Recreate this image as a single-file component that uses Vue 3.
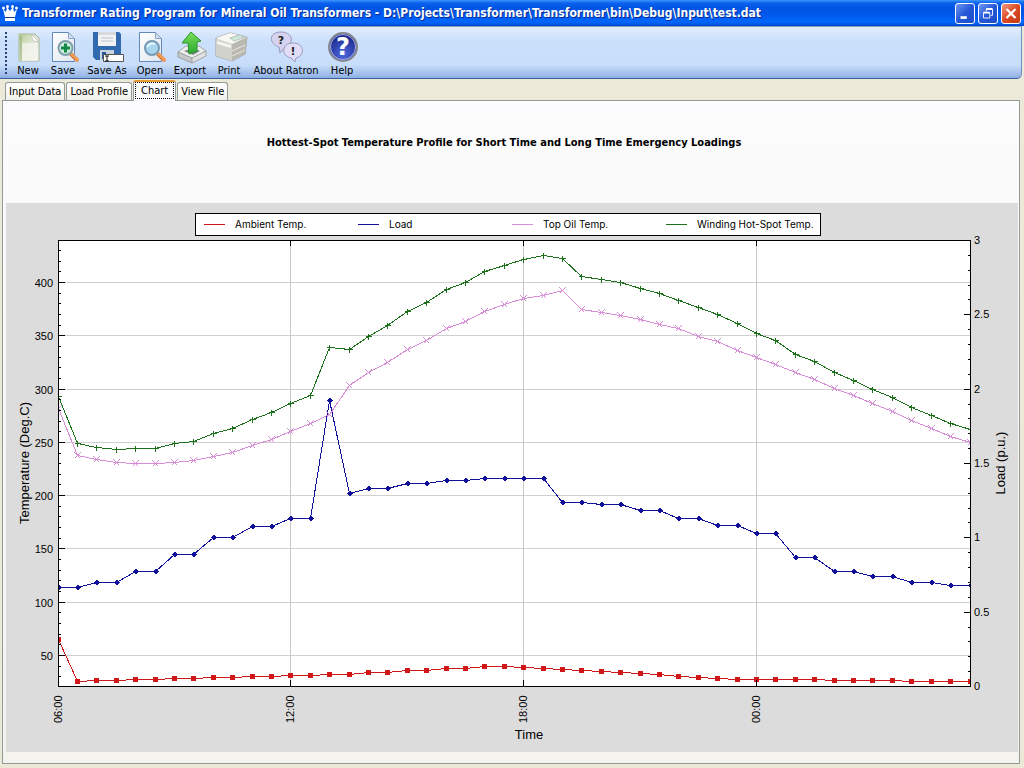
<script setup>
import { ref } from 'vue'

const tabs = ['Input Data', 'Load Profile', 'Chart', 'View File']
const active = ref('Chart')

const left = 52
const right = 964
const top = 37
const bottom = 483
const xAt = (i) => Math.floor(left + ((right - left) * i) / 47)

// Vertical plot positions, one per half hour from 06:00
const series = [
  {
    name: 'Ambient Temp.', color: '#d01818', shape: 'square',
    ys: [437, 479, 478, 478, 477, 477, 476, 476, 475, 475, 474, 474, 473, 473, 472, 472, 470, 470, 468, 468, 466, 466, 464, 464, 465, 466, 467, 468, 469, 470, 471, 472, 474, 475, 476, 477, 477, 477, 477, 477, 478, 478, 478, 478, 479, 479, 479, 479],
  },
  {
    name: 'Load', color: '#10109a', shape: 'diamond',
    ys: [385, 385, 380, 380, 369, 369, 352, 352, 335, 335, 324, 324, 316, 316, 198, 291, 286, 286, 281, 281, 278, 278, 276, 276, 276, 276, 300, 300, 302, 302, 308, 308, 316, 316, 323, 323, 331, 331, 355, 355, 369, 369, 374, 374, 380, 380, 383, 383],
  },
  {
    name: 'Top Oil Temp.', color: '#d68cd6', shape: 'cross',
    ys: [206, 253, 257, 260, 261, 261, 260, 258, 254, 250, 243, 237, 229, 221, 212, 183, 170, 160, 147, 138, 126, 119, 109, 102, 96, 93, 88, 107, 110, 113, 117, 122, 126, 134, 139, 148, 155, 162, 170, 177, 186, 193, 201, 209, 218, 226, 234, 240],
  },
  {
    name: 'Winding Hot-Spot Temp.', color: '#1c701c', shape: 'plus',
    ys: [194, 241, 245, 247, 246, 246, 241, 239, 231, 226, 217, 210, 201, 193, 145, 147, 134, 123, 109, 100, 87, 80, 69, 63, 57, 53, 56, 74, 77, 80, 86, 91, 98, 105, 112, 121, 131, 138, 152, 159, 170, 178, 187, 195, 205, 213, 221, 227],
  },
]
const points = (ys) => ys.map((y, i) => `${xAt(i)},${y}`).join(' ')
const marks = {
  square: 'M-2.5-2.5h5v5h-5z',
  diamond: 'M0-3L3 0 0 3-3 0z',
  cross: 'M-3-3L3 3M-3 3L3-3',
  plus: 'M-3 0H3M0-3V3',
}

const tempY = (t) => Math.round(452 - ((t - 50) * 373) / 350)
const temps = [50, 100, 150, 200, 250, 300, 350, 400]
const tempMinor = Array.from({ length: 42 }, (_, i) => 30 + i * 10).filter((t) => t % 50 && t < 440)
const loadY = (l) => Math.round(bottom - ((bottom - top) * l) / 3)
const loads = [0, 0.5, 1, 1.5, 2, 2.5, 3]
const loadMinor = Array.from({ length: 30 }, (_, i) => i / 10).filter((l) => (l * 10) % 5)
const times = [['06:00', 0], ['12:00', 12], ['18:00', 24], ['00:00', 36]]
</script>

<template>
  <div class="window">
    <header class="titlebar">
      <svg class="crown" viewBox="0 0 16 18" aria-hidden="true">
        <path d="M3 13L1 5l3 3 1-5 3 4 3-4 1 5 3-3-2 8z" fill="#fff" />
        <circle cx="1.5" cy="4" r="1.5" fill="#fff" /><circle cx="5.5" cy="2.5" r="1.5" fill="#fff" />
        <circle cx="10.5" cy="2.5" r="1.5" fill="#fff" /><circle cx="14.5" cy="4" r="1.5" fill="#fff" />
        <path d="M3 14h10v3H3z" fill="#fff" /><path d="M3 13.5h10" stroke="#123a80" />
      </svg>
      <h1>Transformer Rating Program for Mineral Oil Transformers - D:\Projects\Transformer\Transformer\bin\Debug\Input\test.dat</h1>
      <div class="controls">
        <button type="button" aria-label="Minimize"><svg viewBox="0 0 20 20"><path d="M5 13h7v3H5z" fill="#fff" /></svg></button>
        <button type="button" aria-label="Restore"><svg viewBox="0 0 20 20" fill="none" stroke="#fff"><path d="M8 8V5.5h7V12h-2M5 9v6h7V9z" /><path d="M8 5h7M5 9h7" stroke-width="2" /></svg></button>
        <button type="button" class="close" aria-label="Close"><svg viewBox="0 0 20 20"><path d="M5 5l10 10M15 5L5 15" stroke="#fff" stroke-width="2.5" /></svg></button>
      </div>
    </header>

    <nav class="toolbar" aria-label="Main">
      <span class="grip"></span>
      <div class="tools">
        <button type="button">
          <svg viewBox="0 0 32 32" aria-hidden="true">
            <defs>
              <linearGradient id="paper" x1="0" y1="0" x2="1" y2="1"><stop offset="0" stop-color="#fff" /><stop offset="1" stop-color="#dfe6ee" /></linearGradient>
              <linearGradient id="sheet" x1="0" y1="0" x2="1" y2="1"><stop offset="0" stop-color="#b4cc94" /><stop offset=".5" stop-color="#e4e8d8" /><stop offset="1" stop-color="#f4f4ee" /></linearGradient>
              <linearGradient id="green" x1="0" y1="0" x2="0" y2="1"><stop offset="0" stop-color="#7be05a" /><stop offset="1" stop-color="#28a82c" /></linearGradient>
              <radialGradient id="blue" cx=".5" cy=".75" r=".75"><stop offset="0" stop-color="#4c68e0" /><stop offset="1" stop-color="#15207e" /></radialGradient>
            </defs>
            <path d="M7 3h16l4 4v23H7z" fill="url(#sheet)" stroke="#aab89a" />
            <path d="M10 12h16v18H10z" fill="#f5f5ef" opacity=".7" /><path d="M9 5v24" stroke="#8eae6e" stroke-width="2" opacity=".5" />
            <path d="M19 3l8 8-6-1z" fill="#fff" stroke="#c6cabc" />
          </svg>New
        </button>
        <button type="button">
          <svg viewBox="0 0 32 32" aria-hidden="true">
            <path d="M5.5 1.5h16l6 6v23h-22z" fill="url(#paper)" stroke="#6287bd" /><path d="M21.5 1.5v6h6z" fill="#d4dfeb" stroke="#89a5c9" />
            <path d="M24 23l6 6" stroke="#f09a58" stroke-width="4" stroke-linecap="round" /><path d="M23 24l5 5" stroke="#c46325" />
            <circle cx="18.5" cy="17" r="7" fill="#cdebd9" stroke="#7e9fac" stroke-width="2" /><path d="M14 17h9M18.5 12.5v9" stroke="#16884a" stroke-width="3" />
          </svg>Save
        </button>
        <button type="button">
          <svg viewBox="0 0 32 32" aria-hidden="true">
            <path d="M2 1h26l2 2v26H5l-3-3z" fill="#3369af" /><path d="M7 1h18v14H7z" fill="#f0f2f3" /><path d="M7 1h18v3H7z" fill="#d6dadf" />
            <path d="M10 7h12M10 10h12" stroke="#bcc3ca" /><path d="M9 19h14v10H9z" fill="#c9d4e0" /><path d="M11 21h4v7h-4z" fill="#24569b" />
            <path d="M12.5 23.5h20v7h-20z" fill="#fff" stroke="#555" /><path d="M14 25h4M16 25v5M14 30h4" stroke="#111" />
          </svg>Save As
        </button>
        <button type="button">
          <svg viewBox="0 0 32 32" aria-hidden="true">
            <path d="M5.5 1.5h16l6 6v23h-22z" fill="url(#paper)" stroke="#6287bd" /><path d="M21.5 1.5v6h6z" fill="#d4dfeb" stroke="#89a5c9" />
            <path d="M24 23l6 6" stroke="#f09a58" stroke-width="4" stroke-linecap="round" /><path d="M23 24l5 5" stroke="#c46325" />
            <circle cx="18" cy="17" r="7" fill="#a8d6ef" stroke="#7899b3" stroke-width="2" /><path d="M13 16q3-5 8-3" fill="none" stroke="#e6f6ff" stroke-width="2" />
          </svg>Open
        </button>
        <button type="button">
          <svg viewBox="0 0 32 32" aria-hidden="true">
            <path d="M4 21l8-6h13l7 5-14 8z" fill="#eceeed" stroke="#a5a9a8" /><path d="M4 21l14 6v5L4 26z" fill="#c5c9c9" stroke="#999f9f" /><path d="M18 27l14-7v5l-14 7z" fill="#dfe2e1" stroke="#a0a5a4" />
            <path d="M10 20l9 4 7-4-7-3z" fill="#7e8684" /><path d="M17 1l10 9-4 1v9l-8 3-1-11H8z" fill="url(#green)" stroke="#299634" />
          </svg>Export
        </button>
        <button type="button">
          <svg viewBox="0 0 32 32" aria-hidden="true">
            <path d="M3 7l14-5 17 4-2 17-13 7-16-5z" fill="#e2e2de" stroke="#a1a19d" /><path d="M3 7l14-5 17 4-14 7z" fill="#f8f8f5" />
            <path d="M3 8l16 5v17L3 25z" fill="#d2d2cc" /><path d="M19 13l15-7-2 17-13 7z" fill="#b9b9b2" /><path d="M17 7l9-3 6 2-11 4z" fill="#cfe6da" stroke="#b5c5bb" />
            <path d="M4 10l14 4v3L4 13z" fill="#f4f4f0" /><path d="M19 20l13-6M19 25l13-6" stroke="#e8e8e2" />
          </svg>Print
        </button>
        <button type="button">
          <svg viewBox="0 0 32 32" aria-hidden="true">
            <path d="M9 16l1 6 5-6c9-2 9-15-4-15S-1 13 9 16z" fill="#d5d3f0" stroke="#9b99bd" />
            <path d="M21 27l4 4 1-4c9-2 9-15-3-15s-12 13-2 15z" fill="#e0def6" stroke="#9b99bd" />
            <text x="11" y="13" class="mark small">?</text><text x="23" y="24" class="mark small">!</text>
          </svg>About Ratron
        </button>
        <button type="button">
          <svg viewBox="0 0 32 32" aria-hidden="true">
            <circle cx="17" cy="16" r="14" fill="url(#blue)" stroke="#85878f" stroke-width="2" /><circle cx="17" cy="16" r="12.5" fill="none" stroke="#a6b0e8" />
            <text x="17" y="24" class="mark big">?</text>
          </svg>Help
        </button>
      </div>
    </nav>

    <div class="tabs" role="tablist">
      <button v-for="tab in tabs" :key="tab" type="button" role="tab" :aria-selected="tab === active" :class="{ selected: tab === active }" @click="active = tab"><span>{{ tab }}</span></button>
    </div>

    <main class="panel">
      <h2>Hottest-Spot Temperature Profile for Short Time and Long Time Emergency Loadings</h2>
      <svg class="chart" viewBox="0 0 1012 549" role="img" aria-label="Temperature and load against time">
        <rect width="1012" height="549" fill="#dcdcdc" />
        <g shape-rendering="crispEdges">
          <rect x="189.5" y="10.5" width="625" height="22" fill="#fff" stroke="#000" />
          <rect :x="left" :y="top" :width="right - left" :height="bottom - top" fill="#fff" />
          <path v-for="t in temps" :key="t" :d="`M${left} ${tempY(t) + 0.5}H${right}`" stroke="#d0d0d0" />
          <path v-for="[name, i] in times.slice(1)" :key="name" :d="`M${xAt(i) + 0.5} ${top}V${bottom}`" stroke="#c8c8c8" />
        </g>
        <g v-for="(s, n) in series" :key="s.name">
          <path :d="`M${198 + n * 154} 21.5h21`" :stroke="s.color" />
          <text :x="229 + n * 154" y="25" class="legend">{{ s.name }}</text>
        </g>
        <svg :x="left" :y="top" :width="right - left + 1" :height="bottom - top + 1" :viewBox="`${left} ${top} ${right - left + 1} ${bottom - top + 1}`">
          <g v-for="s in series" :key="s.name" :stroke="s.color" shape-rendering="crispEdges" transform="translate(0.5 -0.5)">
            <polyline :points="points(s.ys)" fill="none" />
            <path v-for="(y, i) in s.ys" :key="i" :d="marks[s.shape]" :transform="`translate(${xAt(i)} ${y})`" :fill="s.color" :stroke-width="s.shape === 'diamond' || s.shape === 'square' ? 0 : 1" />
          </g>
        </svg>
        <g shape-rendering="crispEdges" stroke="#000" fill="none">
          <rect :x="left + 0.5" :y="top + 0.5" :width="right - left" :height="bottom - top" />
          <path v-for="t in temps" :key="`a${t}`" :d="`M${left} ${tempY(t) + 0.5}h7`" />
          <path v-for="t in tempMinor" :key="`b${t}`" :d="`M${left} ${tempY(t) + 0.5}h3`" />
          <path v-for="l in loads" :key="`c${l}`" :d="`M${right} ${loadY(l) + 0.5}h-6`" />
          <path v-for="l in loadMinor" :key="`d${l}`" :d="`M${right} ${loadY(l) + 0.5}h-2`" />
          <path v-for="[name, i] in times.slice(1)" :key="name" :d="`M${xAt(i) + 0.5} ${top}v6M${xAt(i) + 0.5} ${bottom}v-6`" />
        </g>
        <g class="ticks">
          <text v-for="t in temps" :key="t" x="47" :y="tempY(t) + 5" text-anchor="end">{{ t }}</text>
          <text v-for="l in loads" :key="`l${l}`" x="968" :y="loadY(l) + 4">{{ l }}</text>
          <text v-for="[name, i] in times" :key="name" :transform="`translate(${xAt(i) + 4} 520) rotate(-90)`">{{ name }}</text>
        </g>
        <g class="axis" text-anchor="middle">
          <text x="523" y="536">Time</text>
          <text transform="translate(23 260) rotate(-90)">Temperature (Deg.C)</text>
          <text transform="translate(999 260) rotate(-90)">Load (p.u.)</text>
        </g>
      </svg>
    </main>
  </div>
</template>

<style>
body { margin: 0; background: #ece9d8; }
</style>

<style scoped>
.window {
  min-height: 100vh;
  box-sizing: border-box;
  display: flex;
  flex-direction: column;
  background: #ece9d8;
  font-family: "DejaVu Sans Condensed", "DejaVu Sans", sans-serif;
  font-size: 11px;
  color: #000;
}
button { font: inherit; color: inherit; padding: 0; border: 0; background: none; }
.titlebar {
  display: flex;
  align-items: center;
  height: 26px;
  padding: 0 3px 0 2px;
  background: linear-gradient(#3d95ff 0, #0b62ee 3px, #0054e3 8px, #0058ec 15px, #0267ff 22px, #0048cc 26px);
}
.crown { width: 16px; height: 18px; margin-right: 4px; }
h1 {
  flex: 1;
  margin: 0;
  overflow: hidden;
  white-space: nowrap;
  font: bold 12px/20px "DejaVu Sans Condensed", "DejaVu Sans", sans-serif;
  color: #fff;
  text-shadow: 1px 1px 0 #0a2a90;
}
.controls { display: flex; gap: 3px; }
.controls button {
  box-sizing: border-box;
  width: 20px;
  height: 21px;
  border: 1px solid #fff;
  border-radius: 3px;
  background: linear-gradient(135deg, #6f97f4, #2558d8 50%, #1c4cc8);
}
.controls .close { background: linear-gradient(135deg, #f09a80, #dc4a24 50%, #c23a16); }
.controls svg { display: block; width: 100%; height: 100%; }
.toolbar {
  display: flex;
  align-items: center;
  height: 51px;
  margin-right: 2px;
  border-top: 1px solid #8e9db8;
  border-bottom: 1px solid #3b619c;
  border-right: 1px solid #6d8fc8;
  border-radius: 0 0 5px 0;
  background: linear-gradient(#e2edfc 0, #cbe0fb 14px, #c8ddf9 38px, #9dbbea 48px, #8caee4 51px);
}
.grip {
  width: 2px;
  height: 42px;
  margin: 0 4px 0 5px;
  background: repeating-linear-gradient(#27417a 0 2px, transparent 2px 4px);
}
.tools { display: grid; grid-template-columns: 34px 36px 52px 34px 46px 32px 82px 30px; padding-top: 3px; }
.tools button {
  display: flex;
  flex-direction: column;
  align-items: center;
  gap: 1px;
  line-height: 14px;
  white-space: nowrap;
}
.tools svg { width: 32px; height: 32px; overflow: visible; }
.mark { font-family: "DejaVu Sans", sans-serif; font-weight: bold; text-anchor: middle; }
.small { font-size: 11px; fill: #222; }
.big { font-size: 24px; fill: #fff; }
.tabs { display: flex; align-items: flex-end; gap: 1px; height: 21px; padding-left: 5px; }
.tabs button {
  box-sizing: border-box;
  height: 18px;
  padding: 0 3px;
  border: 1px solid #919b9c;
  border-bottom: 0;
  border-radius: 3px 3px 0 0;
  background: linear-gradient(#fff, #f0f0ea);
  white-space: nowrap;
}
.tabs .selected {
  position: relative;
  z-index: 1;
  height: 21px;
  margin-bottom: -1px;
  padding: 0 1px 2px;
  border-top: 2px solid #e89a35;
  background: #fcfcfe;
}
.tabs .selected span { display: block; padding: 0 5px; border: 1px dotted #000; line-height: 15px; }
.panel {
  flex: 1;
  display: flex;
  flex-direction: column;
  margin: 0 4px 4px 2px;
  padding: 0 1px 0 3px;
  border: 1px solid #919b9c;
  background: linear-gradient(#fcfcfe, #fafafa 102px, #f4f3ee);
}
h2 { margin: 0; padding-right: 16px; text-align: center; font: bold 11px/84px "DejaVu Sans Condensed", sans-serif; height: 102px; }
.chart { display: block; width: 100%; height: auto; }
.legend { font: 10px Inter, sans-serif; }
.ticks { font: 11px "Liberation Sans", Arial, sans-serif; }
.axis { font: 13px "Liberation Sans", Arial, sans-serif; }
</style>
